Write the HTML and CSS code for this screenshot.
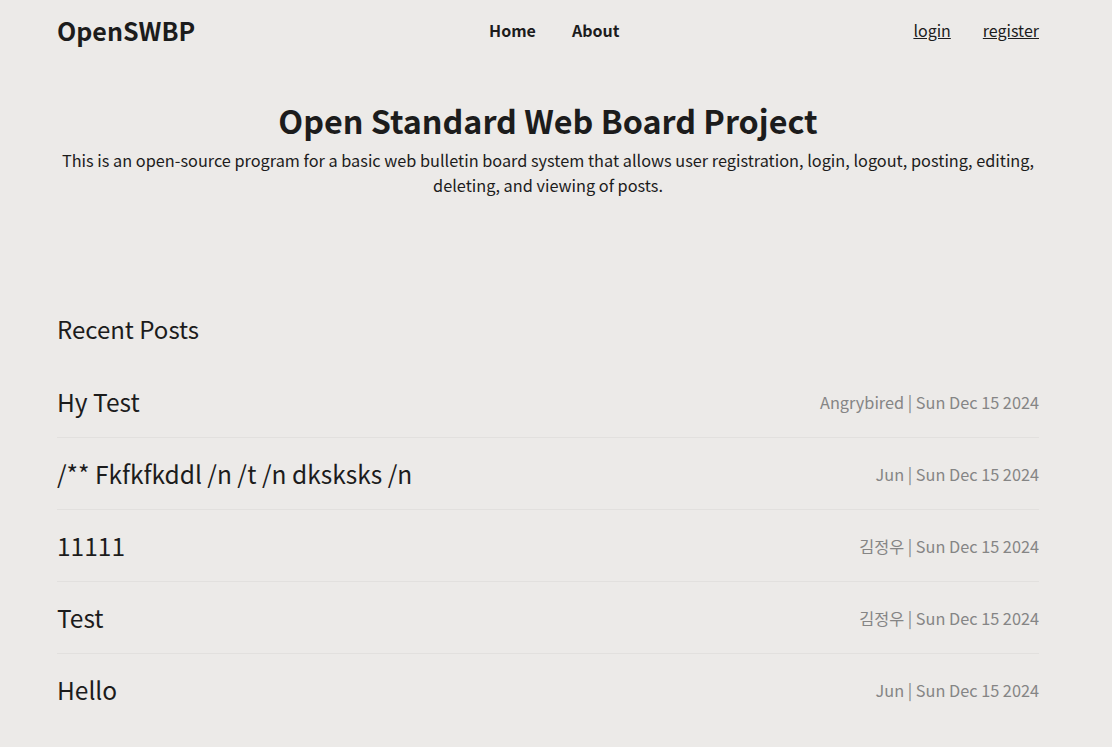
FILE: index.html
```html
<!DOCTYPE html>
<html lang="en">
<head>
<meta charset="utf-8">
<title>OpenSWBP</title>
<link rel="stylesheet" href="styles.css">
</head>
<body>
<div class="page">
  <header class="topbar">
    <div class="brand">OpenSWBP</div>
    <nav class="mainnav">
      <a href="#">Home</a>
      <a href="#">About</a>
    </nav>
    <div class="auth">
      <a href="#">login</a>
      <a href="#">register</a>
    </div>
  </header>

  <section class="hero">
    <h1>Open Standard Web Board Project</h1>
    <p>This is an open-source program for a basic web bulletin board system that allows user registration, login, logout, posting, editing, deleting, and viewing of posts.</p>
  </section>

  <section class="recent">
    <h2>Recent Posts</h2>
    <ul class="posts">
      <li class="post"><span class="title">Hy Test</span><span class="meta">Angrybired | Sun Dec 15 2024</span></li>
      <li class="post"><span class="title">/** Fkfkfkddl /n /t /n dksksks /n</span><span class="meta">Jun | Sun Dec 15 2024</span></li>
      <li class="post"><span class="title">11111</span><span class="meta">김정우 | Sun Dec 15 2024</span></li>
      <li class="post"><span class="title">Test</span><span class="meta">김정우 | Sun Dec 15 2024</span></li>
      <li class="post"><span class="title">Hello</span><span class="meta">Jun | Sun Dec 15 2024</span></li>
    </ul>
  </section>
</div>
</body>
</html>
```
FILE: styles.css
```css
html, body {
  margin: 0;
  padding: 0;
  background: #eceae8;
}
body {
  font-family: "Noto Sans CJK KR", "Noto Sans", sans-serif;
  color: #1c1c1c;
}
.page {
  width: 982px;
  margin: 0 57px;
}
.topbar {
  display: flex;
  justify-content: space-between;
  align-items: center;
  height: 59px;
}
.brand {
  font-size: 25px;
  font-weight: 700;
}
.mainnav {
  display: flex;
  gap: 36px;
}
.mainnav a {
  font-size: 16px;
  font-weight: 700;
  color: #1c1c1c;
  text-decoration: none;
}
.auth {
  display: flex;
  gap: 32px;
}
.auth a {
  font-size: 16px;
  color: #1c1c1c;
  text-decoration: underline;
}
.hero {
  text-align: center;
  padding-top: 33px;
}
.hero h1 {
  margin: 0;
  font-size: 32.3px;
  font-weight: 700;
  line-height: 56px;
}
.hero p {
  margin: 0;
  font-size: 16.3px;
  line-height: 25px;
}
.recent {
  padding-top: 113px;
}
.recent h2 {
  margin: 0 0 19px;
  font-size: 24px;
  font-weight: 400;
  line-height: 36px;
}
.posts {
  list-style: none;
  margin: 0;
  padding: 0;
}
.post {
  display: flex;
  justify-content: space-between;
  align-items: center;
  height: 71px;
  border-bottom: 1px solid #e2e0de;
}
.post:last-child {
  border-bottom: none;
}
.title {
  font-size: 24.5px;
}
.meta {
  font-size: 16.3px;
  color: #858585;
}
```
